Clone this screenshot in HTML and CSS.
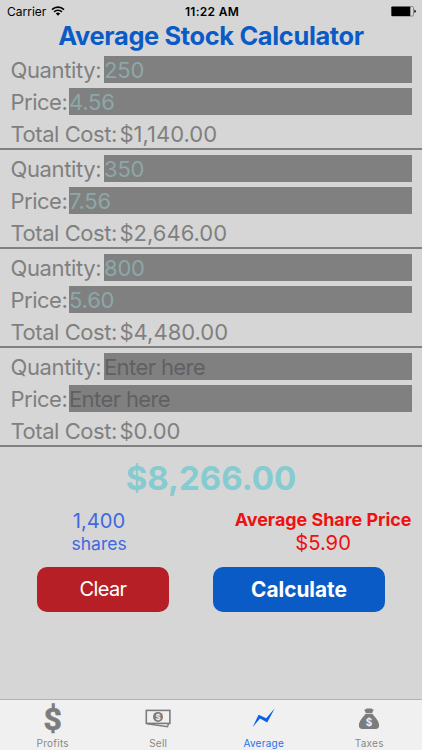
FILE: index.html
```html
<!DOCTYPE html>
<html lang="en">
<head>
  <meta charset="UTF-8" />
  <meta name="viewport" content="width=device-width, initial-scale=1.0" />
  <title>Average Stock Calculator</title>
  <link rel="stylesheet" href="styles.css">
</head>
<body>
  <div class="app">
    <div class="status-bar">
      <div class="carrier">
        <span>Carrier</span>
        <svg class="wifi" viewBox="0 0 14 10" width="14" height="10">
          <path d="M1 3.6a8.6 8.6 0 0 1 12 0M3.1 5.9a5.6 5.6 0 0 1 7.8 0" fill="none" stroke="#000" stroke-width="1.6" />
          <path d="M7 9.8L4.8 7.5a3.2 3.2 0 0 1 4.4 0z" />
        </svg>
      </div>
      <div class="time">11:22 AM</div>
      <svg class="battery" viewBox="0 0 25 11" width="25" height="11">
        <rect x=".5" y=".5" width="22" height="9.6" rx="1.2" fill="none" stroke="#777" stroke-width=".8" />
        <rect x=".5" y=".7" width="18.8" height="9.3" rx=".6" />
        <path d="M23.4 3.6q1.4.4 1.4 1.7t-1.4 1.7z" />
      </svg>
    </div>

    <h1>Average Stock Calculator</h1>

    <div class="lots">
      <div class="lot">
        <label class="row"><span class="qty-label">Quantity:</span><input type="text" value="250" placeholder="Enter here"></label>
        <label class="row"><span class="price-label">Price:</span><input type="text" value="4.56" placeholder="Enter here"></label>
        <div class="row"><span class="cost-label">Total Cost:</span><span class="cost">$1,140.00</span></div>
      </div>
      <div class="lot">
        <label class="row"><span class="qty-label">Quantity:</span><input type="text" value="350" placeholder="Enter here"></label>
        <label class="row"><span class="price-label">Price:</span><input type="text" value="7.56" placeholder="Enter here"></label>
        <div class="row"><span class="cost-label">Total Cost:</span><span class="cost">$2,646.00</span></div>
      </div>
      <div class="lot">
        <label class="row"><span class="qty-label">Quantity:</span><input type="text" value="800" placeholder="Enter here"></label>
        <label class="row"><span class="price-label">Price:</span><input type="text" value="5.60" placeholder="Enter here"></label>
        <div class="row"><span class="cost-label">Total Cost:</span><span class="cost">$4,480.00</span></div>
      </div>
      <div class="lot">
        <label class="row"><span class="qty-label">Quantity:</span><input type="text" placeholder="Enter here"></label>
        <label class="row"><span class="price-label">Price:</span><input type="text" placeholder="Enter here"></label>
        <div class="row"><span class="cost-label">Total Cost:</span><span class="cost">$0.00</span></div>
      </div>
    </div>

    <div class="total">$8,266.00</div>

    <div class="summary">
      <div class="shares">
        <div class="share-count">1,400</div>
        <div class="share-word">shares</div>
      </div>
      <div class="average">
        <div class="average-title">Average Share Price</div>
        <div class="average-price">$5.90</div>
      </div>
    </div>

    <div class="buttons">
      <button class="btn clear">Clear</button>
      <button class="btn calculate">Calculate</button>
    </div>

    <div class="tab-bar">
      <div class="tab">
        <div class="icon dollar"><span>$</span></div>
        <span class="tab-label">Profits</span>
      </div>
      <div class="tab">
        <div class="icon">
          <svg viewBox="0 0 28 30" width="28" height="30">
            <rect x="2.3" y="6.4" width="23.6" height="13" fill="none" stroke="#7c7c7c" stroke-width="1.6" />
            <path d="M3 19.8l20.6 2.9.9-3.2" fill="none" stroke="#7c7c7c" stroke-width="1.4" />
            <circle cx="14" cy="12.9" r="5" fill="#7c7c7c" />
            <text x="14" y="15.8" text-anchor="middle" class="coin">$</text>
          </svg>
        </div>
        <span class="tab-label">Sell</span>
      </div>
      <div class="tab active">
        <div class="icon">
          <svg viewBox="0 0 28 30" width="28" height="30">
            <path d="M2.6 23.2L8.6 10.8l7.6 3.4L24.8 4.2 17.2 18.4l-7.2-3.8z" fill="#0b60ea" />
          </svg>
        </div>
        <span class="tab-label">Average</span>
      </div>
      <div class="tab">
        <div class="icon">
          <svg viewBox="0 0 28 30" width="28" height="30">
            <path d="M9.2 5.5q1.5.3 2.4-.9h4.8q.9 1.2 2.4.9l-1.7 3.6h-6.2z" fill="#7c7c7c" />
            <path d="M10.6 9.8h6.8c2.1 3 6.7 7.1 6.7 11.7 0 2.3-1.3 3.4-3.2 3.4H7.1c-1.9 0-3.2-1.1-3.2-3.4 0-4.6 4.6-8.7 6.7-11.7z" fill="#7c7c7c" />
            <text x="14" y="21.5" text-anchor="middle" class="bag">$</text>
          </svg>
        </div>
        <span class="tab-label">Taxes</span>
      </div>
    </div>
  </div>
</body>
</html>
```
FILE: styles.css
```css
* {
  box-sizing: border-box;
}
body {
  margin: 0;
  background: #d6d6d6;
  font-family: Inter, "Liberation Sans", sans-serif;
  color: #808080;
}
.app {
  display: flex;
  flex-direction: column;
  width: 422px;
  height: 750px;
  overflow: hidden;
}
.status-bar {
  display: grid;
  grid-template-columns: 1fr auto 1fr;
  align-items: center;
  height: 22px;
  padding: 0 6px 0 7px;
  color: #000;
  font-size: 12px;
}
.carrier {
  display: flex;
  align-items: center;
  gap: 5px;
}
.time {
  padding-left: 1px;
  font-weight: 600;
  letter-spacing: 0.3px;
}
.battery {
  justify-self: end;
}
h1 {
  height: 34px;
  margin: 0;
  line-height: 28px;
  text-align: center;
  font-size: 25.4px;
  font-weight: 700;
  letter-spacing: -0.34px;
  color: #0b5bc7;
}
.lot {
  height: 98.9px;
  padding: 0 10.5px;
}
.lot::after {
  content: "";
  display: block;
  height: 2px;
  margin: -4px -10.5px 0;
  background: #808080;
}
.row {
  display: flex;
  align-items: stretch;
  height: 27px;
  margin-bottom: 5px;
  line-height: 28px;
  font-size: 22px;
  white-space: nowrap;
}
.qty-label {
  width: 93.5px;
  letter-spacing: -0.38px;
}
.price-label {
  width: 58.5px;
  letter-spacing: -0.5px;
}
.cost-label {
  width: 109px;
  letter-spacing: -0.45px;
}
input {
  flex: 1;
  min-width: 0;
  padding: 1px 0 0;
  border: none;
  border-radius: 0;
  background: #808080;
  color: #8ca8a8;
  font: inherit;
  letter-spacing: -0.2px;
}
input::placeholder {
  color: #5f6064;
  letter-spacing: -0.6px;
  opacity: 1;
}
.total {
  margin-top: 5px;
  height: 42px;
  line-height: 43px;
  text-align: center;
  font-size: 33px;
  font-weight: 700;
  color: #86cbd0;
}
.summary {
  display: flex;
  justify-content: space-between;
  margin-top: 9px;
  padding: 0 10.5px 0 71.5px;
  text-align: center;
}
.share-count,
.average-price {
  font-size: 20.2px;
  line-height: 24px;
}
.shares {
  padding-top: 1px;
  color: #4169e1;
}
.share-word {
  font-size: 17.5px;
  line-height: 22px;
}
.average {
  color: #ee1111;
}
.average-title {
  font-size: 17.9px;
  line-height: 23px;
  font-weight: 700;
}
.buttons {
  display: flex;
  justify-content: space-between;
  margin-top: 12px;
  padding: 0 37px;
}
.btn {
  height: 45px;
  padding: 0;
  border: none;
  border-radius: 10px;
  color: #fff;
  font-family: inherit;
}
.clear {
  width: 132px;
  background: #b71f26;
  font-size: 20px;
  letter-spacing: -0.6px;
}
.calculate {
  width: 172px;
  background: #0b5bc7;
  font-size: 20.8px;
  font-weight: 700;
}
.tab-bar {
  display: flex;
  height: 51px;
  margin-top: auto;
  border-top: 1px solid #b2b2b2;
  background: #f0f0f0;
}
.tab {
  display: flex;
  flex: 1;
  flex-direction: column;
  align-items: center;
  padding-top: 4px;
  color: #888;
}
.icon {
  display: flex;
  justify-content: center;
  height: 32px;
}
.dollar {
  font-family: Roboto, sans-serif;
  font-size: 32px;
  font-weight: 700;
  line-height: 30px;
  color: #7c7c7c;
  -webkit-text-stroke: 0.6px #7c7c7c;
}
.coin {
  fill: #f0f0f0;
  font-size: 8px;
  font-weight: 700;
}
.bag {
  fill: #f0f0f0;
  font-size: 10px;
  font-weight: 700;
}
.tab-label {
  font-size: 10px;
  line-height: 14px;
  letter-spacing: 0.25px;
}
.tab.active {
  color: #2a6fe8;
}
```
